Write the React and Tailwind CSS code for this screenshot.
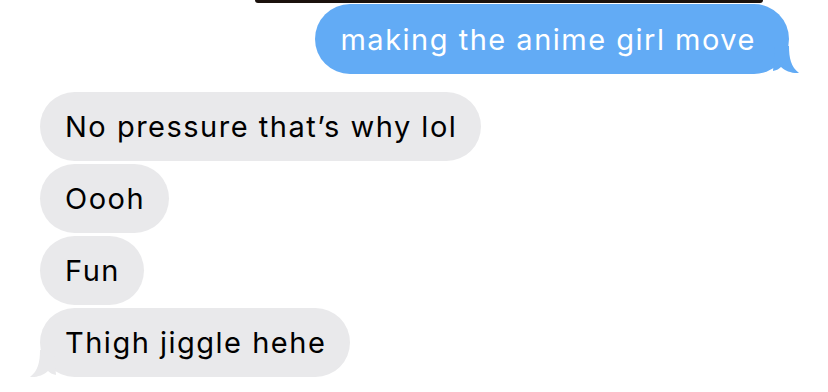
import React from "react";

function Gray({ children, tail }) {
  return (
    <div className="relative h-[69px] rounded-full bg-[#e9e9eb] pl-[25px] pr-[24px] flex items-center w-fit">
      <span className="text-[29px] leading-none text-black tracking-[1.5px]">{children}</span>
      {tail && (
        <svg className="absolute left-[-10px] bottom-[-1px]" width="26" height="28" viewBox="0 0 26 28">
          <path d="M24 0 H10 C10 12 8 21 0 27 C7 27.5 14 25 18 21 C20 23 22 24 26 25 Z" fill="#e9e9eb" />
        </svg>
      )}
    </div>
  );
}

export default function App() {
  return (
    <div className="w-[828px] h-[392px] bg-white overflow-hidden flex flex-col" style={{ fontFamily: "Inter, 'Noto Sans', sans-serif" }}>
      <div className="ml-[255px] w-[508px] h-[3px] bg-[#1b120d] rounded-b-[3px]" />
      <div className="flex justify-end pr-[39px] mt-[1px]">
        <div className="relative h-[70px] rounded-full bg-[#62abf5] pl-[25px] pr-[33px] flex items-center">
          <span className="text-[29px] leading-none text-white tracking-[1.5px]">making the anime girl move</span>
          <svg className="absolute right-[-10px] bottom-0" width="26" height="28" viewBox="0 0 26 28">
            <path d="M2 0 H16 C16 12 18 21 26 27 C19 27.5 12 25 8 21 C6 23 4 24 0 25 Z" fill="#62abf5" />
          </svg>
        </div>
      </div>
      <div className="flex flex-col gap-[3px] pl-[40px] mt-[18px]">
        <Gray>No pressure that’s why lol</Gray>
        <Gray>Oooh</Gray>
        <Gray>Fun</Gray>
        <Gray tail>Thigh jiggle hehe</Gray>
      </div>
    </div>
  );
}
